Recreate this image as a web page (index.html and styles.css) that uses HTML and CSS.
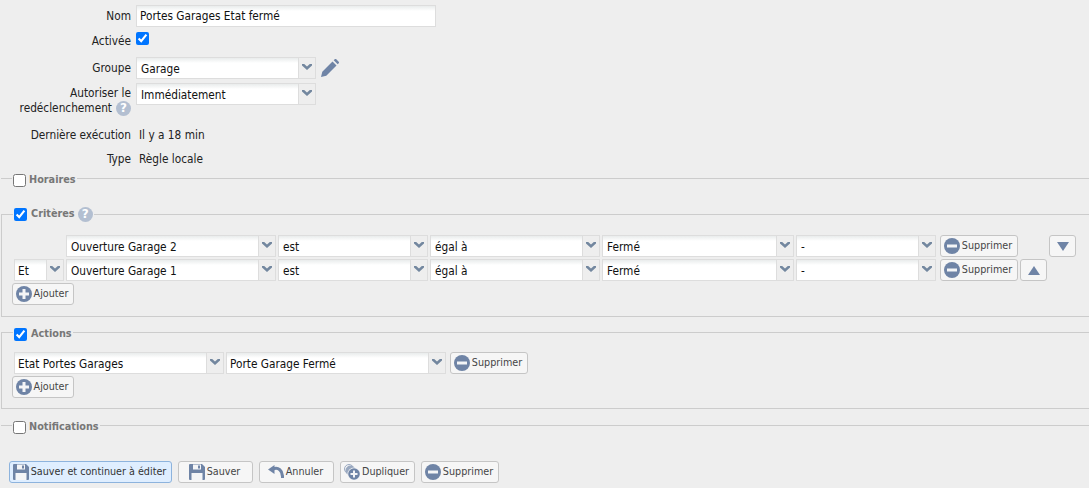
FILE: index.html
```html
<!DOCTYPE html>
<html lang="fr">
<head>
<meta charset="utf-8">
<title>Règle</title>
<link rel="stylesheet" href="styles.css">
</head>
<body>
<svg class="defs" width="0" height="0" aria-hidden="true">
  <symbol id="chev" viewBox="0 0 10 6"><path d="M0 0h2.200L5 2.400 7.800 0H10v1.600L5 6 0 1.600z"/></symbol>
  <symbol id="i-minus" viewBox="0 0 16 16"><circle cx="8" cy="8" r="8" fill="#6f84a6"/><rect x="3" y="6.500" width="10" height="3" fill="#f4f5f7"/></symbol>
  <symbol id="i-plus" viewBox="0 0 16 16"><circle cx="8" cy="8" r="8" fill="#6f84a6"/><path d="M6.500 3h3v3.500H13v3H9.500V13h-3V9.500H3v-3h3.500z" fill="#f4f5f7"/></symbol>
  <symbol id="i-save" viewBox="0 0 16 16"><path d="M0 1a1 1 0 0 1 1-1h12l3 3v12a1 1 0 0 1-1 1H1a1 1 0 0 1-1-1z" fill="#6f84a6"/><rect x="4" y="0.500" width="8" height="5" fill="#f4f5f7"/><rect x="9" y="1.500" width="2" height="3" fill="#6f84a6"/><rect x="2.500" y="9" width="11" height="7" fill="#f4f5f7"/></symbol>
  <symbol id="i-undo" viewBox="0 0 16 16"><path d="M5 5C10 3 15 6 14.500 14" fill="none" stroke="#6f84a6" stroke-width="3"/><path d="M0 5.500L6.500 1v9z" fill="#6f84a6"/></symbol>
  <symbol id="i-dup" viewBox="0 0 16 16"><circle cx="5" cy="5" r="4.500" fill="none" stroke="#9aa9c0" stroke-width="1"/><circle cx="6.500" cy="6.500" r="5" fill="#9aa9c0"/><circle cx="10" cy="10" r="6.500" fill="#f4f5f7"/><circle cx="10" cy="10" r="5.800" fill="#6f84a6"/><path d="M9 6.500h2V9h2.500v2H11v2.500H9V11H6.500V9H9z" fill="#f4f5f7"/></symbol>
</svg>

<form class="rule">
  <div class="row row-nom">
    <span class="lab">Nom</span>
    <div class="field field-name">Portes Garages Etat fermé</div>
  </div>
  <div class="row row-check">
    <span class="lab">Activée</span>
    <input class="box" type="checkbox" checked>
  </div>
  <div class="row">
    <span class="lab">Groupe</span>
    <div class="inline">
      <div class="sel w-180"><span class="sel-text">Garage</span><span class="sel-arrow"><svg><use href="#chev"/></svg></span></div>
      <svg class="pencil" viewBox="0 0 18 18"><path d="M0 18l1.300-5.300L11.500 2.500l4 4L5.300 16.700zM12.700 1.300l1-1a1.200 1.200 0 0 1 1.600 0l2.400 2.400a1.200 1.200 0 0 1 0 1.600l-1 1z" fill="#6f84a6"/></svg>
    </div>
  </div>
  <div class="row row-tall">
    <div class="lab-wrap">
      <span>Autoriser le</span>
      <div class="lab-line"><span>redéclenchement</span><span class="help">?</span></div>
    </div>
    <div class="sel w-180"><span class="sel-text">Immédiatement</span><span class="sel-arrow"><svg><use href="#chev"/></svg></span></div>
  </div>
  <div class="row row-info">
    <span class="lab">Dernière exécution</span>
    <span class="val">Il y a 18 min</span>
  </div>
  <div class="row row-info row-last">
    <span class="lab">Type</span>
    <span class="val">Règle locale</span>
  </div>

  <fieldset class="set set-closed set-horaires">
    <legend class="leg"><input class="box" type="checkbox"><span>Horaires</span></legend>
  </fieldset>

  <fieldset class="set set-crit">
    <legend class="leg leg-help"><input class="box" type="checkbox" checked><span>Critères</span><span class="help">?</span></legend>
    <div class="line">
      <span class="sp-et"></span>
      <div class="sel w-210"><span class="sel-text">Ouverture Garage 2</span><span class="sel-arrow"><svg><use href="#chev"/></svg></span></div>
      <div class="sel w-150"><span class="sel-text">est</span><span class="sel-arrow"><svg><use href="#chev"/></svg></span></div>
      <div class="sel w-170"><span class="sel-text">égal à</span><span class="sel-arrow"><svg><use href="#chev"/></svg></span></div>
      <div class="sel w-192"><span class="sel-text">Fermé</span><span class="sel-arrow"><svg><use href="#chev"/></svg></span></div>
      <div class="sel w-140"><span class="sel-text">-</span><span class="sel-arrow"><svg><use href="#chev"/></svg></span></div>
      <button class="btn btn-del" type="button"><svg class="ico"><use href="#i-minus"/></svg>Supprimer</button>
      <button class="btn btn-move btn-down" type="button"><svg viewBox="0 0 12 9"><path d="M0 0h12L6 9z"/></svg></button>
    </div>
    <div class="line">
      <div class="sel w-50"><span class="sel-text">Et</span><span class="sel-arrow"><svg><use href="#chev"/></svg></span></div>
      <div class="sel w-210"><span class="sel-text">Ouverture Garage 1</span><span class="sel-arrow"><svg><use href="#chev"/></svg></span></div>
      <div class="sel w-150"><span class="sel-text">est</span><span class="sel-arrow"><svg><use href="#chev"/></svg></span></div>
      <div class="sel w-170"><span class="sel-text">égal à</span><span class="sel-arrow"><svg><use href="#chev"/></svg></span></div>
      <div class="sel w-192"><span class="sel-text">Fermé</span><span class="sel-arrow"><svg><use href="#chev"/></svg></span></div>
      <div class="sel w-140"><span class="sel-text">-</span><span class="sel-arrow"><svg><use href="#chev"/></svg></span></div>
      <button class="btn btn-del" type="button"><svg class="ico"><use href="#i-minus"/></svg>Supprimer</button>
      <button class="btn btn-move" type="button"><svg viewBox="0 0 12 9"><path d="M6 0l6 9H0z"/></svg></button>
    </div>
    <button class="btn btn-add" type="button"><svg class="ico"><use href="#i-plus"/></svg>Ajouter</button>
  </fieldset>

  <fieldset class="set set-act">
    <legend class="leg"><input class="box" type="checkbox" checked><span>Actions</span></legend>
    <div class="line">
      <div class="sel w-210"><span class="sel-text">Etat Portes Garages</span><span class="sel-arrow"><svg><use href="#chev"/></svg></span></div>
      <div class="sel w-220"><span class="sel-text">Porte Garage Fermé</span><span class="sel-arrow"><svg><use href="#chev"/></svg></span></div>
      <button class="btn btn-del" type="button"><svg class="ico"><use href="#i-minus"/></svg>Supprimer</button>
    </div>
    <button class="btn btn-add" type="button"><svg class="ico"><use href="#i-plus"/></svg>Ajouter</button>
  </fieldset>

  <fieldset class="set set-closed set-notif">
    <legend class="leg"><input class="box" type="checkbox"><span>Notifications</span></legend>
  </fieldset>

  <div class="actions">
    <button class="btn btn-primary" type="button"><svg class="ico"><use href="#i-save"/></svg>Sauver et continuer à éditer</button>
    <button class="btn btn-b" type="button"><svg class="ico"><use href="#i-save"/></svg>Sauver</button>
    <button class="btn btn-b" type="button"><svg class="ico"><use href="#i-undo"/></svg>Annuler</button>
    <button class="btn btn-b" type="button"><svg class="ico"><use href="#i-dup"/></svg>Dupliquer</button>
    <button class="btn btn-b btn-last" type="button"><svg class="ico"><use href="#i-minus"/></svg>Supprimer</button>
  </div>
</form>
</body>
</html>
```

FILE: styles.css
```css
* { box-sizing: border-box; }
html, body { margin: 0; height: 100%; overflow: hidden; }
body {
  background: #eeeeee;
  color: #222;
  font: 11.75px/16px "DejaVu Sans Condensed", "DejaVu Sans", sans-serif;
}
.defs { position: absolute; }
.rule { padding-top: 5px; }
.row {
  display: grid;
  grid-template-columns: 131px 1fr;
  column-gap: 5px;
  margin-bottom: 4px;
  min-height: 22px;
  align-items: start;
}
.lab { text-align: right; line-height: 22px; }
.row-check { height: 22px; }
.row-check .lab { line-height: 20px; }
.row-check .box { margin-top: 1px; }
.row-tall { min-height: 36px; margin-bottom: 5px; }
.lab-wrap { text-align: right; line-height: 15px; padding-top: 3px; }
.lab-line { display: flex; justify-content: flex-end; gap: 4px; }
.row-info { margin-bottom: 2px; }
.row-last { margin-bottom: 0; }
.val { padding-left: 3px; line-height: 22px; }
.field {
  height: 22px;
  width: 300px;
  padding: 0 3px;
  line-height: 21px;
  background: linear-gradient(#e9ecec, #fff 5px);
  border: 1px solid #dddddd;
  color: #111;
}
.inline { display: flex; align-items: center; gap: 5px; }
.sel {
  display: flex;
  height: 22px;
  background: linear-gradient(#e9ecec, #fff 5px);
  border: 1px solid #dddddd;
  color: #111;
  line-height: 22px;
  flex: none;
}
.sel-text { flex: 1; padding-left: 4px; overflow: hidden; white-space: nowrap; }
.w-50 .sel-text, .set-act .sel-text { padding-left: 3px; }
.sel-arrow {
  width: 17px;
  display: flex;
  justify-content: center;
  padding-top: 6px;
  background: #eeeeee;
  border-left: 1px solid #dddddd;
}
.sel-arrow svg { width: 10px; height: 6px; fill: #73879f; }
.w-50 { width: 50px; }
.w-140 { width: 140px; }
.w-150 { width: 150px; }
.w-170 { width: 170px; }
.w-180 { width: 180px; }
.w-192 { width: 192px; }
.w-210 { width: 210px; }
.w-220 { width: 220px; }
.pencil { width: 18px; height: 18px; }
.help {
  display: inline-block;
  flex: none;
  width: 15px;
  height: 15px;
  border-radius: 50%;
  background: #b3bfd1;
  color: #fff;
  font: bold 12px/15px "DejaVu Sans", sans-serif;
  text-align: center;
}
.box { margin: 0; width: 13px; height: 13px; flex: none; }
.set {
  margin: 0 -2px 0 1px;
  padding: 0 0 0 11px;
  min-width: 0;
  border: 1px solid #cccccc;
}
.set-closed { border-width: 1px 0 0 0; }
.leg {
  display: flex;
  align-items: center;
  gap: 4px;
  height: 20px;
  padding: 4px 1px 0;
  color: #777;
  font-size: 10.8px;
  font-weight: bold;
  line-height: 16px;
}
.set-closed .leg { gap: 3px; }
.leg-help { height: 16px; padding-top: 0; }
.leg-help .help { margin-left: -1px; }
.set-horaires { margin-top: -2px; height: 20px; }
.set-crit { margin-top: 18px; height: 111px; padding-top: 13px; }
.set-act { margin-top: 5px; height: 87px; padding-top: 10px; }
.set-notif { margin-top: 6px; height: 20px; }
.line { display: flex; gap: 2px; margin-bottom: 2px; padding-left: 1px; }
.sp-et { width: 50px; flex: none; }
.btn {
  display: inline-flex;
  align-items: center;
  justify-content: center;
  height: 22px;
  padding: 0 2px 0 0;
  margin: 0;
  background: #f6f6f6;
  border: 1px solid #c5c5c5;
  border-radius: 3px;
  color: #454545;
  font: 10.7px/16px "DejaVu Sans Condensed", "DejaVu Sans", sans-serif;
  white-space: nowrap;
}
.ico { width: 16px; height: 16px; margin-right: 2px; flex: none; }
.btn-del { margin-left: 2px; width: 78px; }
.btn-add { width: 62px; margin-left: -1px; }
.btn-move { width: 27px; padding: 0; }
.btn-move svg { width: 12px; height: 9px; fill: #6f84a6; }
.btn-down { margin-left: 29px; }
.actions {
  display: flex;
  gap: 6px;
  padding-left: 9px;
  margin-top: 26px;
}
.btn-primary {
  background: #dfeeff;
  border-color: #8db3dd;
  width: 163px;
  color: #333;
}
.btn-b { width: 75px; }
.btn-last { width: 78px; }
```
